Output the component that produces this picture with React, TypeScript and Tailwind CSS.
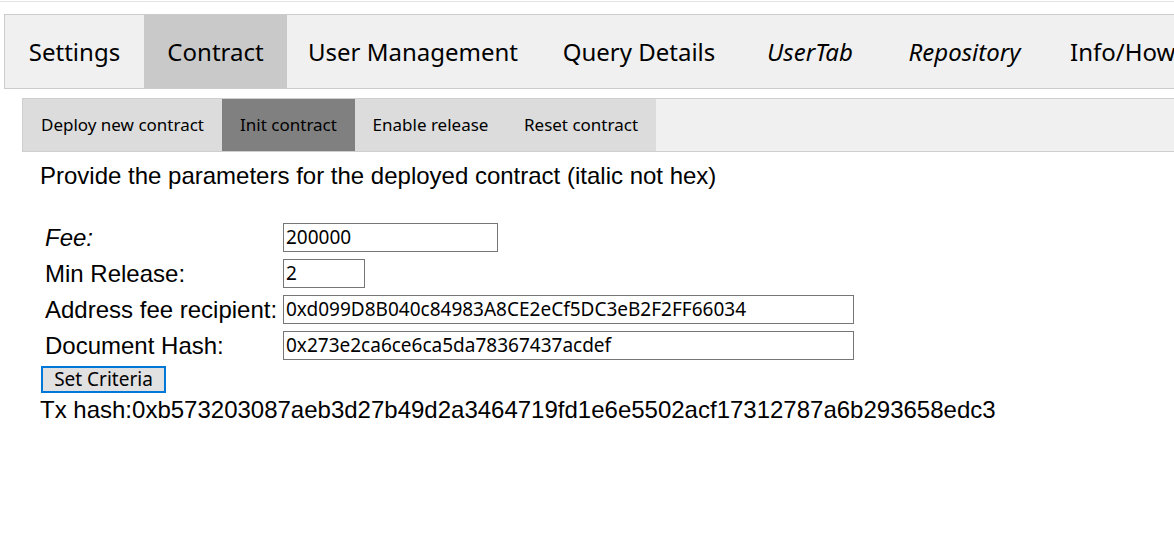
const tabs = [
  { label: 'Settings', w: 'w-[139px] justify-center' },
  { label: 'Contract', w: 'w-[143px] justify-center', active: true },
  { label: 'User Management', w: 'w-[252px] justify-center' },
  { label: 'Query Details', w: 'w-[200px] justify-center' },
  { label: 'UserTab', w: 'w-[142px] justify-center', italic: true },
  { label: 'Repository', w: 'w-[167px] justify-center', italic: true },
  { label: 'Info/How to', w: 'w-[170px] pl-[22px]' },
];

const subTabs = [
  { label: 'Deploy new contract', w: 'w-[199px]' },
  { label: 'Init contract', w: 'w-[133px]', active: true },
  { label: 'Enable release', w: 'w-[151px]' },
  { label: 'Reset contract', w: 'w-[150px]' },
];

const fields = [
  { label: 'Fee:', value: '200000', w: 'w-[215px]', italic: true },
  { label: 'Min Release:', value: '2', w: 'w-[82px]' },
  { label: 'Address fee recipient:', value: '0xd099D8B040c84983A8CE2eCf5DC3eB2F2FF66034', w: 'w-[571px]' },
  { label: 'Document Hash:', value: '0x273e2ca6ce6ca5da78367437acdef', w: 'w-[571px]' },
];

export default function App() {
  return (
    <div className="w-[1174px] h-[547px] overflow-hidden bg-white text-black">
      <div className="mt-px h-[2px] border-t border-[#e3e3e3]" />
      <div className="ml-1 mt-[11px] flex w-[1300px] h-[75px] border border-[#cccccc] bg-[#f0f0f0] font-['Noto_Sans',sans-serif] text-[24px]">
        {tabs.map((t) => (
          <div
            key={t.label}
            className={`${t.w} shrink-0 flex items-center whitespace-nowrap ${t.active ? 'bg-[#c9c9c9]' : ''} ${t.italic ? 'italic' : ''}`}
          >
            {t.label}
          </div>
        ))}
      </div>
      <div className="ml-[22px] mt-[9px] flex w-[1200px] h-[54px] border border-[#cfcfcf] bg-[#f0f0f0] font-['Noto_Sans',sans-serif] text-[17px]">
        {subTabs.map((t) => (
          <div
            key={t.label}
            className={`${t.w} shrink-0 flex items-center justify-center whitespace-nowrap ${t.active ? 'bg-[#808080]' : 'bg-[#dcdcdc]'}`}
          >
            {t.label}
          </div>
        ))}
      </div>
      <div className="pl-10 font-['Liberation_Sans',Arial,sans-serif] text-[24px]">
        <p className="mt-[10px] leading-[27px]">Provide the parameters for the deployed contract (italic not hex)</p>
        <div className="mt-[34px] ml-[5px] flex flex-col gap-[7px]">
          {fields.map((f) => (
            <div key={f.label} className="flex items-center h-[29px]">
              <span className={`w-[238px] leading-none ${f.italic ? 'italic' : ''}`}>{f.label}</span>
              <div
                className={`${f.w} h-[29px] border border-[#767676] flex items-center pl-[2px] font-['Noto_Sans',sans-serif] text-[19px] whitespace-nowrap overflow-hidden`}
              >
                {f.value}
              </div>
            </div>
          ))}
        </div>
        <button className="mt-[6px] ml-[1px] w-[125px] h-[27px] border-2 border-[#0078d7] bg-[#e1e1e1] font-['Noto_Sans',sans-serif] text-[19px] leading-none flex items-center justify-center">
          Set Criteria
        </button>
        <p className="mt-[3px] leading-[27px]">Tx hash:0xb573203087aeb3d27b49d2a3464719fd1e6e5502acf17312787a6b293658edc3</p>
      </div>
    </div>
  );
}
